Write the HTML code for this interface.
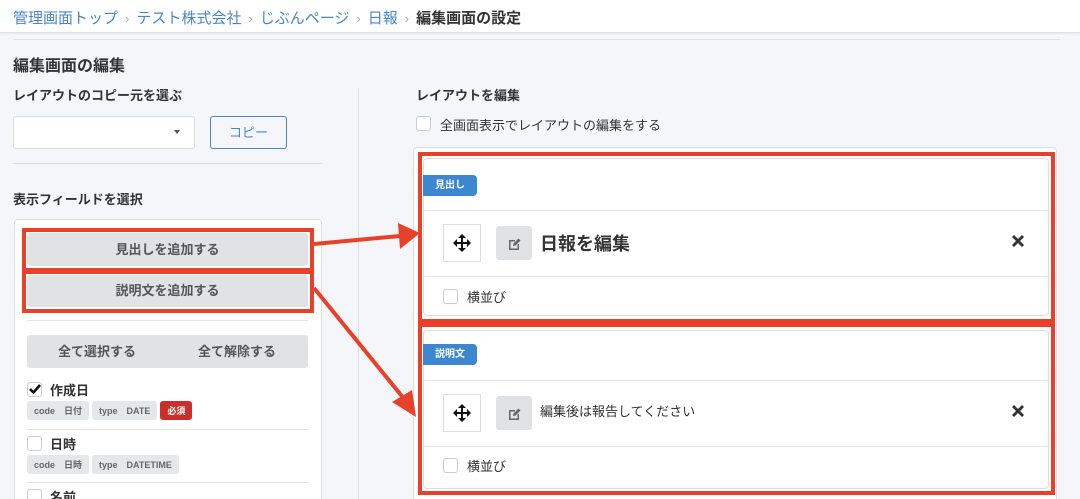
<!DOCTYPE html>
<html><head><meta charset="utf-8"><style>
*{box-sizing:border-box;margin:0;padding:0}
html,body{width:1080px;height:499px;overflow:hidden}
body{background:#f5f6fa;font-family:"Liberation Sans","Noto Sans CJK JP",sans-serif;color:#333;position:relative}
.a{position:absolute}
.hdr{left:0;top:0;width:1080px;height:33px;background:#fff;border-bottom:1px solid #dfe1e5;box-shadow:0 1px 2px rgba(0,0,0,.06)}
.bc{left:13px;top:7px;font-size:15px;color:#4a86c5;white-space:nowrap}
.bc .s{color:#aaa;margin:0 7px;font-size:13px}
.bc b{color:#333}
.btn{background:#e1e2e4;border-radius:3px;text-align:center;color:#555;font-size:13px;font-weight:bold}
.red{border:4px solid #e8412a}
.cb{width:15px;height:15px;border:1px solid #ccc;border-radius:3px;background:#fff}
.tag{display:inline-block;background:#e6e7e9;border-radius:3px;font-size:9px;color:#666;padding:3px 7px;margin-right:3px;font-weight:bold}
.card{background:#fff;border:1px solid #ddd;border-radius:4px}
.badge{background:#3d87d0;color:#fff;font-size:10px;font-weight:bold;border-radius:0 4px 4px 0;padding:0 12px;line-height:21px}
.hl{height:1px;background:#e5e5e5}
.mv{width:38px;height:38px;border:1px solid #ddd;background:#fff}
.ed{width:36px;height:34px;background:#e1e2e4;border-radius:3px}
</style></head><body>
<svg width="0" height="0" style="position:absolute"><defs>
<g id="mv"><path d="M10 1 L14 5 H11 V9 H15 V6 L19 10 L15 14 V11 H11 V15 H14 L10 19 L6 15 H9 V11 H5 V14 L1 10 L5 6 V9 H9 V5 H6 Z" fill="#111"/></g>
<g id="ed"><path d="M2 4 H8 V5.5 H3.5 V12.5 H10.5 V8 H12 V14 H2 Z" fill="#666"/><path d="M6 10 L6.5 7.5 L11.5 2.5 L13.5 4.5 L8.5 9.5 Z" fill="#666"/></g>
<g id="x"><path d="M2 4 L4 2 L8 6 L12 2 L14 4 L10 8 L14 12 L12 14 L8 10 L4 14 L2 12 L6 8 Z" fill="#333"/></g>
</defs></svg>
<div class="a hdr"></div>
<div class="a bc">管理画面トップ<span class="s">›</span>テスト株式会社<span class="s">›</span>じぶんページ<span class="s">›</span>日報<span class="s">›</span><b>編集画面の設定</b></div>
<div class="a" style="left:13px;top:39px;width:1047px;height:1px;background:#dfe1e5"></div>
<div class="a" style="left:13px;top:52px;font-size:16px;font-weight:bold">編集画面の編集</div>
<div class="a" style="left:13px;top:85px;font-size:13px;font-weight:bold">レイアウトのコピー元を選ぶ</div>
<div class="a" style="left:13px;top:116px;width:182px;height:33px;background:#fff;border:1px solid #ddd;border-radius:3px"></div>
<div class="a" style="left:174px;top:130px;width:0;height:0;border-left:3.5px solid transparent;border-right:3.5px solid transparent;border-top:4px solid #555"></div>
<div class="a" style="left:210px;top:116px;width:77px;height:33px;border:1px solid #4a86c5;border-radius:3px;color:#4a86c5;font-size:13px;text-align:center;line-height:31px">コピー</div>
<div class="a" style="left:13px;top:163px;width:309px;height:1px;background:#ddd"></div>
<div class="a" style="left:13px;top:189px;font-size:13px;font-weight:bold">表示フィールドを選択</div>
<div class="a" style="left:358px;top:88px;width:1px;height:411px;background:#e0e0e0"></div>
<div class="a card" style="left:14px;top:219px;width:308px;height:290px"></div>
<div class="a btn" style="left:27px;top:233px;width:281px;height:33px;line-height:33px">見出しを追加する</div>
<div class="a btn" style="left:27px;top:275px;width:281px;height:32px;line-height:32px">説明文を追加する</div>
<div class="a red" style="left:22px;top:228px;width:292px;height:44px"></div>
<div class="a red" style="left:22px;top:270px;width:292px;height:43px"></div>
<div class="a" style="left:27px;top:320px;width:281px;height:1px;background:#e5e5e5"></div>
<div class="a btn" style="left:27px;top:335px;width:281px;height:33px;line-height:33px"><span style="position:absolute;left:31px">全て選択する</span><span style="position:absolute;left:171px">全て解除する</span></div>
<div class="a cb" style="left:27px;top:382px"></div>
<svg class="a" style="left:28px;top:382px" width="14" height="14"><path d="M2 7 L5.5 10.5 L12 3" stroke="#111" stroke-width="2.6" fill="none"/></svg>
<div class="a" style="left:50px;top:380px;font-size:13px;font-weight:bold">作成日</div>
<div class="a" style="left:27px;top:401px"><span class="tag">code　日付</span><span class="tag">type　DATE</span><span class="tag" style="background:#c9302c;color:#fff">必須</span></div>
<div class="a" style="left:27px;top:429px;width:281px;height:1px;background:#e5e5e5"></div>
<div class="a cb" style="left:27px;top:436px"></div>
<div class="a" style="left:50px;top:434px;font-size:13px;font-weight:bold">日時</div>
<div class="a" style="left:27px;top:455px"><span class="tag">code　日時</span><span class="tag">type　DATETIME</span></div>
<div class="a" style="left:27px;top:482px;width:281px;height:1px;background:#e5e5e5"></div>
<div class="a cb" style="left:27px;top:489px"></div>
<div class="a" style="left:50px;top:487px;font-size:13px;font-weight:bold">名前</div>

<div class="a" style="left:416px;top:85px;font-size:13px;font-weight:bold">レイアウトを編集</div>
<div class="a cb" style="left:416px;top:116px"></div>
<div class="a" style="left:440px;top:115px;font-size:13px">全画面表示でレイアウトの編集をする</div>
<div class="a card" style="left:413px;top:147px;width:644px;height:360px"></div>

<div class="a card" style="left:423px;top:158px;width:626px;height:158px"></div>
<div class="a badge" style="left:423px;top:175px">見出し</div>
<div class="a hl" style="left:424px;top:210px;width:624px"></div>
<div class="a mv" style="left:443px;top:224px"><svg style="position:absolute;left:8px;top:8px" width="20" height="20"><use href="#mv"/></svg></div>
<div class="a ed" style="left:496px;top:226px"><svg style="position:absolute;left:11px;top:10px" width="16" height="16"><use href="#ed"/></svg></div>
<div class="a" style="left:540px;top:230px;font-size:18px;font-weight:bold">日報を編集</div>
<svg class="a" style="left:1010px;top:233px" width="16" height="16"><use href="#x"/></svg>
<div class="a hl" style="left:424px;top:276px;width:624px"></div>
<div class="a cb" style="left:443px;top:289px"></div>
<div class="a" style="left:467px;top:287px;font-size:13px">横並び</div>
<div class="a red" style="left:418px;top:152px;width:637px;height:171px"></div>

<div class="a card" style="left:423px;top:330px;width:626px;height:159px"></div>
<div class="a badge" style="left:423px;top:344px">説明文</div>
<div class="a hl" style="left:424px;top:380px;width:624px"></div>
<div class="a mv" style="left:443px;top:394px"><svg style="position:absolute;left:8px;top:8px" width="20" height="20"><use href="#mv"/></svg></div>
<div class="a ed" style="left:496px;top:396px"><svg style="position:absolute;left:11px;top:10px" width="16" height="16"><use href="#ed"/></svg></div>
<div class="a" style="left:540px;top:401px;font-size:13px">編集後は報告してください</div>
<svg class="a" style="left:1010px;top:403px" width="16" height="16"><use href="#x"/></svg>
<div class="a hl" style="left:424px;top:446px;width:624px"></div>
<div class="a cb" style="left:443px;top:458px"></div>
<div class="a" style="left:467px;top:456px;font-size:13px">横並び</div>
<div class="a red" style="left:418px;top:323px;width:637px;height:172px"></div>

<svg class="a" style="left:0;top:0" width="1080" height="499">
<line x1="314" y1="244" x2="400" y2="236" stroke="#e8412a" stroke-width="4"/>
<polygon points="420,233 398,223 400,249" fill="#e8412a"/>
<line x1="314" y1="288" x2="405" y2="400" stroke="#e8412a" stroke-width="4"/>
<polygon points="416,417 392,402 412,390" fill="#e8412a"/>
</svg>
</body></html>
